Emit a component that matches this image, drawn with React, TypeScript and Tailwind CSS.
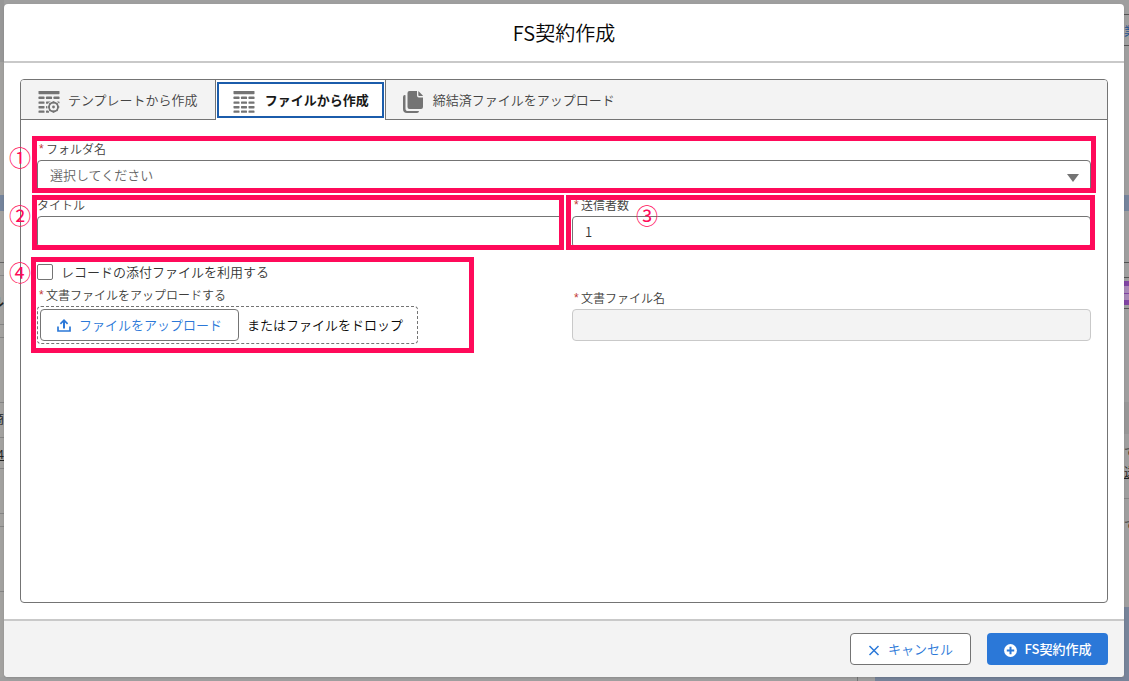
import { useState } from 'react';
import type { ReactNode } from 'react';

function TableIcon({ gear = false }: { gear?: boolean }) {
  const rows = [5.6, 10.4, 15, 19.4];
  return (
    <svg width="22" height="22" viewBox="0 0 22 22" fill="#747474" aria-hidden="true">
      <rect x="0.5" y="0" width="21" height="3.2" rx="0.6" />
      {rows.map((y) => (
        <g key={y}>
          <rect x="0.5" y={y} width="6" height="2.4" rx="0.6" />
          {(!gear || y < 15) && <rect x="8" y={y} width="6" height="2.4" rx="0.6" />}
          {(!gear || y < 10) && <rect x="15.5" y={y} width="6" height="2.4" rx="0.6" />}
        </g>
      ))}
      {gear && (
        <g>
          <rect x="8" y="15" width="2" height="2.4" rx="0.6" />
          <rect x="8" y="19.400" width="3" height="2.400" rx="0.6" />
          <rect x="19" y="10.400" width="2.500" height="2" rx="0.6" />
          <circle cx="15.500" cy="16" r="6.400" fill="#f3f3f3" />
          <circle cx="15.500" cy="16" r="4.500" fill="none" stroke="#747474" strokeWidth="1.8" />
          <path
            d="M15.500 10.200v2M15.500 19.800v2M9.700 16h2M19.300 16h2M11.500 12l1 1M19.500 12l-1 1M11.500 20l1-1M19.500 20l-1-1"
            stroke="#747474"
            strokeWidth="1.6"
          />
          <circle cx="15.500" cy="16" r="1.400" />
        </g>
      )}
    </svg>
  );
}

function CopyIcon() {
  return (
    <svg width="22" height="22" viewBox="0 0 22 22" fill="#747474" aria-hidden="true">
      <path d="M6.500 0H14v4.600A1.900 1.900 0 0 0 15.900 6.500H20V16a2 2 0 0 1-2 2H6.500a2 2 0 0 1-2-2V2a2 2 0 0 1 2-2z" />
      <path d="M15.600 0.300L19.800 4.600a.3.3 0 0 1-.2.500H16.100a.8.8 0 0 1-.8-.8V.5c0-.2.2-.3.300-.2z" />
      <path d="M2.500 4.200v13.300a2.600 2.600 0 0 0 2.600 2.600H16a2 2 0 0 1-2 1.900H4a4 4 0 0 1-4-4V6a2 2 0 0 1 2.500-1.800z" />
    </svg>
  );
}

function UploadIcon() {
  return (
    <svg width="14" height="14" viewBox="0 0 14 14" fill="none" stroke="#2b78d8" aria-hidden="true">
      <path d="M1 8.500V13h12V8.500" strokeWidth="1.7" />
      <path d="M7 10.500V2.500" strokeWidth="2" />
      <path d="M3.400 5.800L7 2.200l3.600 3.600" strokeWidth="1.7" />
    </svg>
  );
}

function Label({ htmlFor, required, children }: { htmlFor: string; required?: boolean; children: ReactNode }) {
  return (
    <label htmlFor={htmlFor} className="flex h-5 gap-0.5 text-xs leading-[18px] text-[#3e3e3c]">
      {required && (
        <span className="w-[7px] pl-0.5 font-['Liberation_Sans',sans-serif] font-normal text-[#c23934]">*</span>
      )}
      {children}
    </label>
  );
}

function Marker({ className, children }: { className: string; children: ReactNode }) {
  return (
    <span className={`pointer-events-none absolute text-[22px] leading-6 font-normal text-[#ff0a5a] ${className}`}>
      {children}
    </span>
  );
}

function Frame({ className }: { className: string }) {
  return (
    <span aria-hidden="true" className={`pointer-events-none absolute border-5 border-[#ff0a5a] ${className}`} />
  );
}

function Backdrop() {
  return (
    <div aria-hidden="true" className="absolute inset-0 flex flex-col overflow-hidden bg-[#9f9f9f]">
      <div className="flex min-h-0 flex-1 justify-between">
        <div className="flex w-1 flex-col overflow-hidden bg-[#a3a2a0]">
          <div className="h-[62px] shrink-0 bg-[#989898]" />
          <div className="mt-[133px] h-4 shrink-0 bg-[#75849c]" />
          <div className="mt-[51px] h-px shrink-0 bg-[#666666]" />
          <div className="mt-3 h-px shrink-0 bg-[#888888]" />
          <div className="mt-4 flex h-5 shrink-0 justify-end text-xs font-bold leading-5 text-[#222222]">ル</div>
          <div className="mt-3 h-px shrink-0 bg-[#858585]" />
          <div className="mt-3 h-px shrink-0 bg-[#858585]" />
          <div className="mt-16 h-px shrink-0 bg-[#858585]" />
          <div className="mt-1.5 flex h-5 shrink-0 justify-end text-xs leading-5 text-[#222222]">商</div>
          <div className="mt-2 h-px shrink-0 bg-[#858585]" />
          <div className="mt-1.5 flex h-5 shrink-0 justify-end text-xs leading-5 text-[#222222] underline">4</div>
          <div className="mt-1 h-px shrink-0 bg-[#858585]" />
          <div className="mt-11 h-px shrink-0 bg-[#858585]" />
          <div className="mt-3 h-px shrink-0 bg-[#858585]" />
          <div className="mt-16 h-px shrink-0 bg-[#858585]" />
        </div>
        <div className="flex w-[5px] flex-col overflow-hidden bg-[#9f9f9f]">
          <div className="mt-3.5 h-px shrink-0 bg-[#555555]" />
          <div className="mt-1.5 h-5 w-3 shrink-0 text-xs leading-5 text-[#24558f]">業</div>
          <div className="mt-1 h-px shrink-0 bg-[#555555]" />
          <div className="mt-[149px] h-4 shrink-0 bg-[#75849c]" />
          <div className="mt-[51px] h-px shrink-0 bg-[#555555]" />
          <div className="mt-3.5 h-px shrink-0 bg-[#555555]" />
          <div className="mt-[3px] flex h-6 shrink-0 flex-col justify-center border-y-5 border-[#8145a3] bg-[#a888b8]">
            <div className="h-px bg-[#8145a3]" />
          </div>
          <div className="mt-[3px] h-px shrink-0 bg-[#555555]" />
          <div className="mt-[93px] h-8 shrink-0 bg-[#979797]" />
          <div className="mt-2 h-5 w-3 shrink-0 text-xs leading-5 text-[#222222]">で</div>
          <div className="h-5 w-3 shrink-0 text-xs leading-5 text-[#222222] underline">送</div>
          <div className="mt-4 h-px shrink-0 bg-[#858585]" />
          <div className="mt-4 h-5 w-3 shrink-0 text-xs leading-5 text-[#222222]">で</div>
          <div className="mt-[72px] flex-1 bg-[#77849a]" />
        </div>
      </div>
      <div className="flex h-1 justify-end">
        <div className="w-[18px] border-l border-[#777777]" />
        <div className="w-[254px] bg-[#77849a]" />
      </div>
    </div>
  );
}

export default function App() {
  const [tab, setTab] = useState(1);
  const tabs = [
    { label: 'テンプレートから作成', icon: <TableIcon gear /> },
    { label: 'ファイルから作成', icon: <TableIcon /> },
    { label: '締結済ファイルをアップロード', icon: <CopyIcon /> },
  ];
  return (
    <div className="relative flex min-h-screen flex-col py-1 pr-[5px] pl-1 font-['Noto_Sans_CJK_JP',sans-serif] text-[13px] text-[#333333]">
      <Backdrop />
      <section
        role="dialog"
        aria-labelledby="dialog-title"
        className="relative flex flex-1 flex-col overflow-hidden rounded-[4px] bg-white shadow-sm"
      >
        <header className="flex h-[59px] items-center justify-center border-b-2 border-[#c9c9c9]">
          <h1 id="dialog-title" className="text-xl font-[350] text-[#080707]">
            FS契約作成
          </h1>
        </header>

        <main className="flex flex-1 flex-col p-4">
          <div className="flex flex-1 flex-col rounded-[4px] border border-[#747474]">
            <div role="tablist" className="flex h-10 rounded-t-[3px] bg-[#f3f3f3]">
              {tabs.map((t, i) => (
                <button
                  key={t.label}
                  type="button"
                  role="tab"
                  aria-selected={tab === i}
                  onClick={() => setTab(i)}
                  className={
                    tab === i
                      ? 'flex bg-white p-px pt-0.5'
                      : 'flex items-center gap-2 border-b border-[#747474] px-[17px] pt-1 font-[350] text-[#444444] first:rounded-tl-[3px] first:border-r last:flex-1 last:border-l'
                  }
                >
                  <span
                    className={
                      tab === i
                        ? 'flex h-9 items-center gap-2.5 border-2 border-[#1b5cab] px-3.5 pr-[13px] pt-1 font-bold text-[#181818]'
                        : 'flex items-center gap-2'
                    }
                  >
                    {t.icon}
                    <span className="pb-1">{t.label}</span>
                  </span>
                </button>
              ))}
            </div>

            <form className="relative flex-1 px-4 pt-5 pb-4 font-[350]" onSubmit={(e) => e.preventDefault()}>
              <Label htmlFor="folder" required>
                フォルダ名
              </Label>
              <div className="relative">
                <select
                  id="folder"
                  className="block h-8 w-full appearance-none rounded-[4px] border border-[#747474] bg-white px-3 pb-0.5 text-[#666666]"
                >
                  <option>選択してください</option>
                </select>
                <svg
                  className="pointer-events-none absolute top-3.5 right-3"
                  width="12"
                  height="8"
                  viewBox="0 0 12 8"
                  fill="#747474"
                  aria-hidden="true"
                >
                  <path d="M0 0h12L6 8z" />
                </svg>
              </div>

              <div className="mt-1 grid grid-cols-2">
                <div>
                  <Label htmlFor="title">タイトル</Label>
                  <input id="title" className="block h-8 w-full rounded-[4px] border border-[#747474] bg-white px-3" />
                </div>
                <div className="pl-2">
                  <Label htmlFor="senders" required>
                    送信者数
                  </Label>
                  <input
                    id="senders"
                    defaultValue="1"
                    className="block h-8 w-full rounded-[4px] border border-[#747474] bg-white px-3 pb-0.5"
                  />
                </div>
              </div>

              <div className="mt-4 flex h-4 items-center gap-2">
                <input
                  id="attachments"
                  type="checkbox"
                  className="size-4 appearance-none rounded-[2px] border border-[#747474] bg-white checked:bg-[#2b78d8]"
                />
                <label htmlFor="attachments">レコードの添付ファイルを利用する</label>
              </div>

              <div className="mt-1.5 grid grid-cols-2">
                <div>
                  <Label htmlFor="upload" required>
                    文書ファイルをアップロードする
                  </Label>
                  <div className="flex h-[38px] w-fit items-center gap-2 rounded-[4px] border border-dashed border-[#747474] py-0.5 pr-3.5 pl-0.5">
                    <button
                      id="upload"
                      type="button"
                      className="flex h-8 items-center gap-2 rounded-[4px] border border-[#747474] bg-white px-4 text-[#2b78d8]"
                    >
                      <UploadIcon />
                      ファイルをアップロード
                    </button>
                    <span className="text-[#080707]">またはファイルをドロップ</span>
                  </div>
                </div>
                <div className="pt-[3px] pl-2">
                  <Label htmlFor="filename" required>
                    文書ファイル名
                  </Label>
                  <input
                    id="filename"
                    disabled
                    className="block h-8 w-full rounded-[4px] border border-[#c9c9c9] bg-[#f3f3f3] px-3"
                  />
                </div>
              </div>

              <Frame className="top-4 right-[11px] left-[11px] h-[57px]" />
              <Frame className="top-[75px] right-1/2 left-[11px] h-[55px]" />
              <Frame className="top-[75px] right-3 left-1/2 ml-0.5 h-[55px]" />
              <Frame className="top-[137px] left-2.5 h-24 w-[443px]" />
              <Marker className="top-6 -left-3">①</Marker>
              <Marker className="top-[82px] -left-3">②</Marker>
              <Marker className="top-[82px] left-1/2 ml-[72px]">③</Marker>
              <Marker className="top-[139px] -left-3">④</Marker>
            </form>
          </div>
        </main>

        <footer className="flex h-[58px] items-center justify-end gap-4 border-t-2 border-[#c9c9c9] bg-[#f3f3f3] px-4">
          <button
            type="button"
            className="flex h-8 w-[121px] items-center justify-center gap-2 rounded-[4px] border border-[#747474] bg-white font-[350] text-[#2b78d8]"
          >
            <svg width="12" height="14" viewBox="0 0 12 14" stroke="#2b78d8" strokeWidth="1.5" aria-hidden="true">
              <path d="M1.500 4l9 9M10.500 4l-9 9" />
            </svg>
            キャンセル
          </button>
          <button
            type="button"
            className="flex h-8 w-[121px] items-center justify-center gap-2 rounded-[4px] bg-[#2b78d8] font-medium text-white"
          >
            <svg width="13" height="16" viewBox="0 0 13 16" aria-hidden="true">
              <circle cx="6.500" cy="9.500" r="6.400" fill="#ffffff" />
              <path d="M6.500 5.800v7.400M2.800 9.500h7.400" stroke="#2b78d8" strokeWidth="2" />
            </svg>
            FS契約作成
          </button>
        </footer>
      </section>
    </div>
  );
}
